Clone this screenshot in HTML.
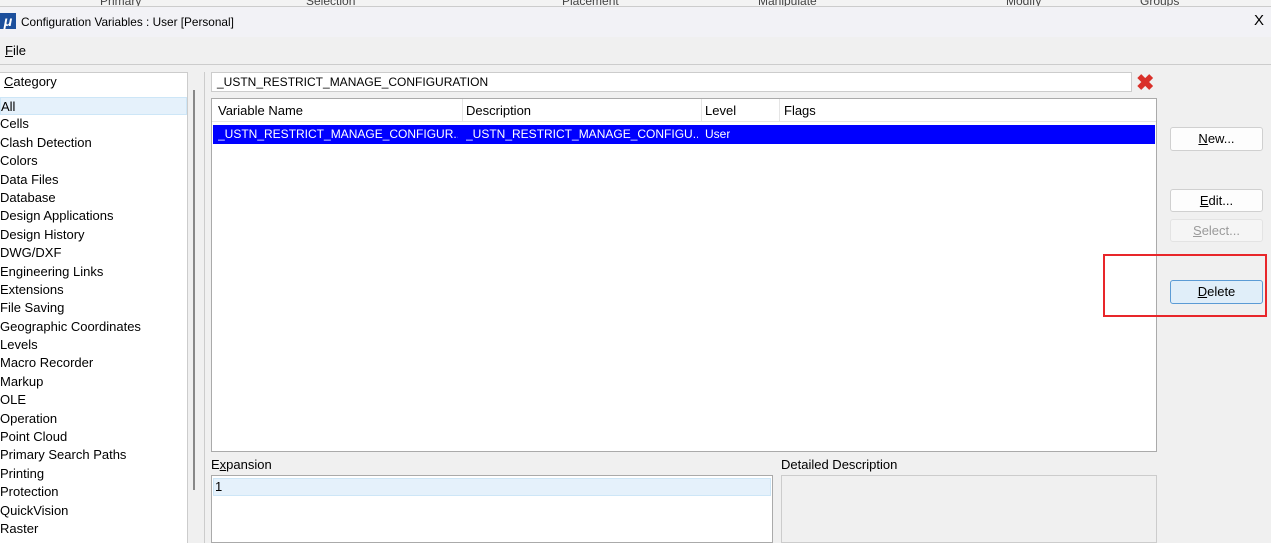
<!DOCTYPE html>
<html><head><style>
*{box-sizing:border-box;margin:0;padding:0}
body{width:1271px;height:543px;overflow:hidden;background:#f0f0f0;font-family:"Liberation Sans",sans-serif;font-size:13px;color:#000;position:relative}
.a{position:absolute}
.rib{left:0;top:0;width:1271px;height:7px;background:#f3f3f3;border-bottom:1px solid #ccc;overflow:hidden}
.rib span{position:absolute;top:-6px;font-size:12px;color:#444}
.title{left:0;top:7px;width:1271px;height:30px;background:#f2f2f6}
.list{left:0;top:72px;width:188px;height:471px;background:#fff;border-top:1px solid #ccc;border-right:1px solid #ccc}
.list div{height:18.4px;line-height:18.4px;padding-left:0}
.btn{position:absolute;left:1170px;width:93px;height:24px;background:#fdfdfd;border:1px solid #d0d0d0;border-radius:3px;text-align:center;line-height:22px}
.row span{position:absolute;overflow:hidden;white-space:nowrap;font-size:12px}
</style></head><body>
<div class="a rib"><span style="left:100px">Primary</span><span style="left:306px">Selection</span><span style="left:562px">Placement</span><span style="left:758px">Manipulate</span><span style="left:1006px">Modify</span><span style="left:1140px">Groups</span></div>
<div class="a title">
<div class="a" style="left:0;top:6px;width:16px;height:16px;background:#1c4f9c;color:#fff;font-style:italic;font-weight:bold;font-size:14px;line-height:16px;text-align:center">μ</div>
<div class="a" style="left:21px;top:8px;font-size:11.8px">Configuration Variables : User [Personal]</div>
<div class="a" style="left:1254px;top:5px;font-size:15px">X</div>
</div>
<div class="a" style="left:5px;top:43px"><u>F</u>ile</div>
<div class="a" style="left:0;top:64px;width:1271px;height:1px;background:#ccc"></div>
<div class="a list">
<div style="padding-left:4px;height:24px;line-height:18px"><u>C</u>ategory</div>
<div style="background:#e5f1fb;border:1px solid #cde6f7">All</div>
<div>Cells</div><div>Clash Detection</div><div>Colors</div><div>Data Files</div><div>Database</div><div>Design Applications</div><div>Design History</div><div>DWG/DXF</div><div>Engineering Links</div><div>Extensions</div><div>File Saving</div><div>Geographic Coordinates</div><div>Levels</div><div>Macro Recorder</div><div>Markup</div><div>OLE</div><div>Operation</div><div>Point Cloud</div><div>Primary Search Paths</div><div>Printing</div><div>Protection</div><div>QuickVision</div><div>Raster</div>
</div>
<div class="a" style="left:193px;top:90px;width:2px;height:400px;background:#888"></div>
<div class="a" style="left:204px;top:72px;width:1px;height:471px;background:#ccc"></div>
<div class="a" style="left:211px;top:72px;width:921px;height:20px;background:#fff;border:1px solid #ccc;padding-left:5px;line-height:18px;font-size:12px">_USTN_RESTRICT_MANAGE_CONFIGURATION</div>
<div class="a" style="left:1136px;top:70px;color:#d9302a;font-size:22px;font-weight:bold">✖</div>
<div class="a" style="left:211px;top:98px;width:946px;height:354px;background:#fff;border:1px solid #aaa">
<div class="a" style="left:0;top:0;width:944px;height:23px;border-bottom:1px solid #e5e5e5"></div>
<div class="a" style="left:6px;top:4px">Variable Name</div>
<div class="a" style="left:250px;top:0;width:1px;height:23px;background:#e5e5e5"></div>
<div class="a" style="left:254px;top:4px">Description</div>
<div class="a" style="left:489px;top:0;width:1px;height:23px;background:#e5e5e5"></div>
<div class="a" style="left:493px;top:4px">Level</div>
<div class="a" style="left:567px;top:0;width:1px;height:23px;background:#e5e5e5"></div>
<div class="a" style="left:572px;top:4px">Flags</div>
<div class="a row" style="left:1px;top:26px;width:942px;height:19px;background:#0000ff;color:#fff;line-height:18px">
<span style="left:5px;width:240px">_USTN_RESTRICT_MANAGE_CONFIGUR...</span><span style="left:253px;width:232px">_USTN_RESTRICT_MANAGE_CONFIGU...</span><span style="left:492px">User</span></div>
</div>
<div class="btn" style="top:127px"><u>N</u>ew...</div>
<div class="btn" style="top:189px;height:23px;line-height:21px"><u>E</u>dit...</div>
<div class="btn" style="top:219px;height:23px;line-height:21px;color:#9a9a9a;background:#f5f5f5;border-color:#e3e3e3"><u>S</u>elect...</div>
<div class="btn" style="top:280px;background:#e0eef9;border-color:#5b9bd5"><u>D</u>elete</div>
<div class="a" style="left:1103px;top:254px;width:164px;height:63px;border:2px solid #e8262a"></div>
<div class="a" style="left:211px;top:457px">E<u>x</u>pansion</div>
<div class="a" style="left:211px;top:475px;width:562px;height:68px;background:#fff;border:1px solid #aaa">
<div class="a" style="left:1px;top:2px;width:558px;height:18px;background:#e5f1fb;border:1px solid #cde6f7;padding-left:1px;line-height:16px">1</div></div>
<div class="a" style="left:781px;top:457px">Detailed Description</div>
<div class="a" style="left:781px;top:475px;width:376px;height:68px;background:#f0f0f0;border:1px solid #ccc"></div>
</body></html>
